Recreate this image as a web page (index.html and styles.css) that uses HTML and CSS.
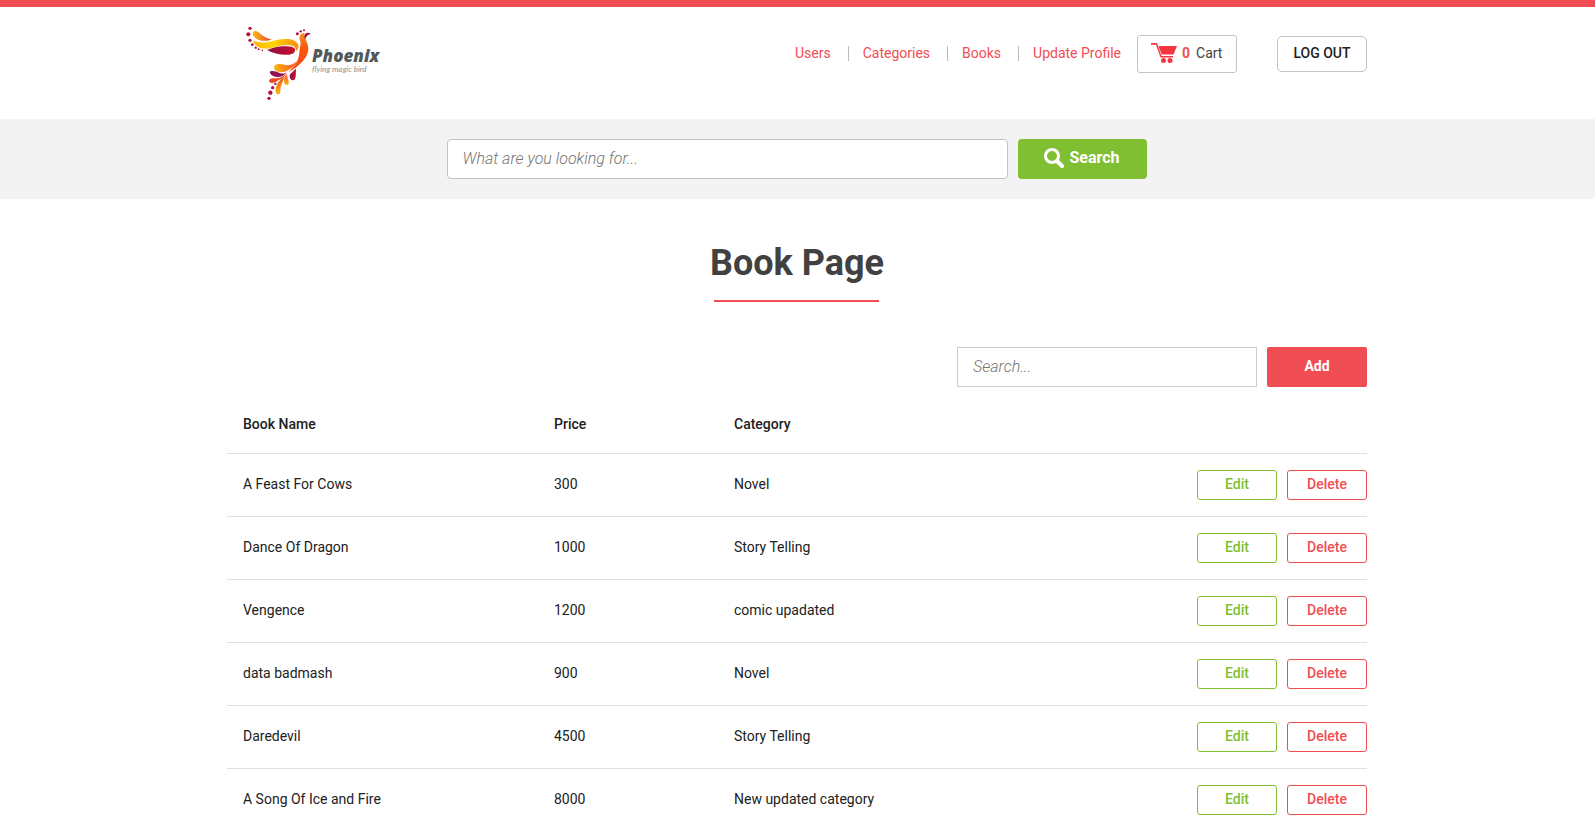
FILE: index.html
```html
<!DOCTYPE html>
<html lang="en">
<head>
<meta charset="utf-8">
<title>Book Page</title>
<link rel="stylesheet" href="styles.css">
</head>
<body>
<header class="site-header">
  <div class="container header-row">
    <a class="logo" href="#" aria-label="Phoenix">
      <svg width="140" height="76" viewBox="21 30 420 228">
        <defs>
          <linearGradient id="wing" x1="0" y1="0" x2="1" y2="0"><stop offset="0" stop-color="#ffb400"/><stop offset=".45" stop-color="#ffd500"/><stop offset="1" stop-color="#ff8a10"/></linearGradient>
          <linearGradient id="body" x1="0" y1="0" x2="0" y2="1"><stop offset="0" stop-color="#f7941d"/><stop offset=".35" stop-color="#fb5a0c"/><stop offset="1" stop-color="#f0431c"/></linearGradient>
          <linearGradient id="top" x1="0" y1="0" x2="1" y2="0"><stop offset="0" stop-color="#fdb913"/><stop offset="1" stop-color="#e8452b"/></linearGradient>
          <linearGradient id="wine" x1="0" y1="0" x2="1" y2="0"><stop offset="0" stop-color="#8f0f45"/><stop offset="1" stop-color="#c8102e"/></linearGradient>
          <linearGradient id="rump" x1="0" y1="0" x2="1" y2="0"><stop offset="0" stop-color="#fdb913"/><stop offset="1" stop-color="#f6501c"/></linearGradient>
          <linearGradient id="tail" x1="0" y1="0" x2="0" y2="1"><stop offset="0" stop-color="#f0501f"/><stop offset="1" stop-color="#fdb913"/></linearGradient>
        </defs>
        <g fill="#b0103c">
          <circle cx="45" cy="40" r="5"/><circle cx="40" cy="58" r="6"/><circle cx="45" cy="76" r="5"/><circle cx="52" cy="89" r="4"/><circle cx="62" cy="98" r="3.500"/><circle cx="71" cy="103" r="3"/><circle cx="82" cy="106" r="2.500"/>
          <circle cx="187" cy="56" r="4.500"/><circle cx="197" cy="49" r="3.500"/><circle cx="207" cy="46" r="3"/>
          <circle cx="121" cy="207" r="3.500"/><circle cx="113" cy="218" r="5"/><circle cx="106" cy="233" r="6.500"/><circle cx="102" cy="250" r="5"/>
        </g>
        <path fill="url(#top)" d="M53 58C53 47 62 46 70 52C84 62 92 71 110 73C92 83 59 76 53 58Z"/>
        <path fill="url(#wine)" d="M96 105C115 98 130 93 158 94C177 95 184 102 179 110C172 125 123 121 96 105Z"/>
        <path fill="url(#wing)" d="M54 76C72 85 91 84 112 78C146 68 184 68 190 91C191 97 189 104 183 109C184 97 176 91 160 90C130 89 116 100 94 101C72 101 57 91 54 76Z"/>
        <path fill="url(#body)" d="M194 74C192 60 201 52 209 55C207 72 220 82 220 101C220 125 197 151 159 172C179 154 192 137 193 111C194 96 200 85 194 74Z"/>
        <path fill="#a30f48" d="M208 66C208 53 219 50 228 56C218 58 214 64 210 73Z"/>
        <path fill="url(#rump)" d="M117 156C119 145 133 145 151 150C164 152 175 148 186 137C176 158 160 166 146 171C129 173 116 167 117 156Z"/>
        <path fill="#8f1252" d="M104 171C108 165 123 168 134 174C142 177 149 176 156 171C146 183 136 187 126 186C115 185 106 180 104 171Z"/>
        <path fill="#ee4b22" d="M102 197C105 189 115 190 125 190C139 189 147 182 157 173C148 186 139 191 128 197C116 206 103 206 102 197Z"/>
        <path fill="url(#tail)" d="M150 184C143 199 136 213 136 230C134 242 122 240 122 229C121 214 131 194 150 184Z"/>
        <path fill="url(#tail)" d="M156 177C156 190 164 199 161 207C157 213 148 209 147 201C146 192 150 184 156 177Z"/>
        <path fill="url(#wine)" d="M183 160C182 174 184 184 180 192C175 200 164 195 164 184C164 174 176 171 183 160Z"/>
      </svg>
      <span class="logo-words"><span class="logo-name">Phoenix</span><span class="logo-tag">flying magic bird</span></span>
    </a>
    <div class="header-right">
      <nav class="nav">
        <a href="#">Users</a>
        <a href="#">Categories</a>
        <a href="#">Books</a>
        <a href="#">Update Profile</a>
      </nav>
      <button class="cart" type="button">
        <svg width="26" height="20" viewBox="0 0 26 20" fill="#f6363f"><path d="M0 0H6L10.500 13H22V14.500H9.500L5 1.800H0ZM7.500 3H26L22.500 11.500H10.700Z"/><circle cx="12.500" cy="17.500" r="2.500"/><circle cx="19" cy="17.500" r="2.500"/></svg>
        <span class="count">0</span><span>Cart</span>
      </button>
      <button class="logout" type="button">LOG OUT</button>
    </div>
  </div>
</header>
<form class="search-band">
  <input class="field search-field" type="text" aria-label="Search the store" placeholder="What are you looking for...">
  <button class="search-button" type="button">
    <svg width="20" height="20" viewBox="0 0 20 20" fill="none" stroke="#fff"><circle cx="8" cy="8" r="6.500" stroke-width="3"/><path d="M13 13L18 18" stroke-width="4" stroke-linecap="round"/></svg>
    Search
  </button>
</form>
<main class="container">
  <h1 class="title">Book Page</h1>
  <div class="tools">
    <input class="field filter-field" type="text" aria-label="Search books" placeholder="Search...">
    <button class="add" type="button">Add</button>
  </div>
  <table class="books">
    <thead><tr><th class="col-name">Book Name</th><th class="col-price">Price</th><th>Category</th><th class="col-actions"></th></tr></thead>
    <tbody>
      <tr><td>A Feast For Cows</td><td>300</td><td>Novel</td><td class="actions"><button class="edit" type="button">Edit</button><button class="delete" type="button">Delete</button></td></tr>
      <tr><td>Dance Of Dragon</td><td>1000</td><td>Story Telling</td><td class="actions"><button class="edit" type="button">Edit</button><button class="delete" type="button">Delete</button></td></tr>
      <tr><td>Vengence</td><td>1200</td><td>comic upadated</td><td class="actions"><button class="edit" type="button">Edit</button><button class="delete" type="button">Delete</button></td></tr>
      <tr><td>data badmash</td><td>900</td><td>Novel</td><td class="actions"><button class="edit" type="button">Edit</button><button class="delete" type="button">Delete</button></td></tr>
      <tr><td>Daredevil</td><td>4500</td><td>Story Telling</td><td class="actions"><button class="edit" type="button">Edit</button><button class="delete" type="button">Delete</button></td></tr>
      <tr><td>A Song Of Ice and Fire</td><td>8000</td><td>New updated category</td><td class="actions"><button class="edit" type="button">Edit</button><button class="delete" type="button">Delete</button></td></tr>
    </tbody>
  </table>
</main>
</body>
</html>
```

FILE: styles.css
```css
* { box-sizing: border-box; }
body { margin: 0; background: #fff; color: #212121; font: 14px/20px Roboto, sans-serif; }
button, input { font: inherit; }
button { cursor: pointer; background: #fff; padding: 0; }
.container { max-width: 1141px; margin: 0 auto; padding-right: 1px; }

.site-header { border-top: 7px solid #f14d54; padding: 18px 0; }
.header-row { display: flex; justify-content: space-between; align-items: flex-start; }
.logo { display: flex; margin-left: 15px; text-decoration: none; }
.logo-words { display: flex; flex-direction: column; margin: 22px 0 0 -70px; color: #505a5c; }
.logo-name { font: italic 800 17px/18px "Open Sans", sans-serif; }
.logo-tag { font: italic 400 8px/8px Lato, sans-serif; color: #8a9294; }
.header-right { display: flex; align-items: center; margin-top: 10px; }
.nav { display: flex; align-items: center; padding-bottom: 2px; }
.nav a { color: #f14d54; text-decoration: none; line-height: 15px; }
.nav a + a { margin-left: 17px; padding-left: 14px; border-left: 1px solid #bbb; }
.cart { display: flex; align-items: center; width: 100px; height: 38px; margin: 0 40px 0 16px; padding: 0 13px 2px; border: 1px solid #c4c4c4; border-radius: 3px; color: #414141; }
.cart .count { margin: 0 6px 0 5px; color: #f14d54; font-weight: 700; }
.logout { width: 90px; height: 36px; padding-bottom: 2px; border: 1px solid #c4c4c4; border-radius: 5px; color: #212121; font-weight: 500; }

.search-band { display: flex; justify-content: center; gap: 10px; padding: 20px 22px 20px 20px; background: #f3f3f3; }
.field { height: 40px; padding: 0 15px 2px; border: 1px solid #ccc; outline: 0; background: #fff; font-size: 16px; }
.field::placeholder { color: #757575; opacity: 1; font-style: italic; font-weight: 300; }
.search-field { width: 561px; border-color: #c4c4c4; border-radius: 4px; }
.search-button { display: flex; align-items: center; justify-content: center; gap: 5px; width: 129px; height: 40px; padding-bottom: 2px; border: 0; border-radius: 4px; background: #80bf32; color: #fff; font-size: 16px; font-weight: 700; }

.title { width: max-content; margin: 39px auto 45px; color: #414141; font-size: 36px; line-height: 50px; font-weight: 700; }
.title::after { content: ""; display: block; width: 165px; height: 2px; margin: 12px auto 0; background: #f14d54; }
.tools { display: flex; justify-content: flex-end; gap: 10px; }
.filter-field { width: 300px; }
.add { width: 100px; height: 40px; padding-bottom: 2px; border: 0; border-radius: 2px; background: #f14d54; color: #fff; font-weight: 700; }

.books { width: 100%; border-collapse: collapse; table-layout: fixed; }
.books th, .books td { padding: 16px; text-align: left; border-bottom: 1px solid #e0e0e0; }
.books th { height: 66px; padding-top: 27px; padding-bottom: 18px; font-weight: 500; }
.books td { height: 63px; padding-bottom: 18px; }
.books .col-name { width: 311px; }
.books .col-price { width: 180px; }
.books .col-actions { width: 202px; }
.books .actions { padding: 16px 0; text-align: right; font-size: 0; }
.edit, .delete { width: 80px; height: 30px; padding-bottom: 2px; border: 1px solid #80bf32; border-radius: 3px; color: #80bf32; font-size: 14px; font-weight: 500; }
.delete { margin-left: 10px; border-color: #f14d54; color: #f14d54; }
```
